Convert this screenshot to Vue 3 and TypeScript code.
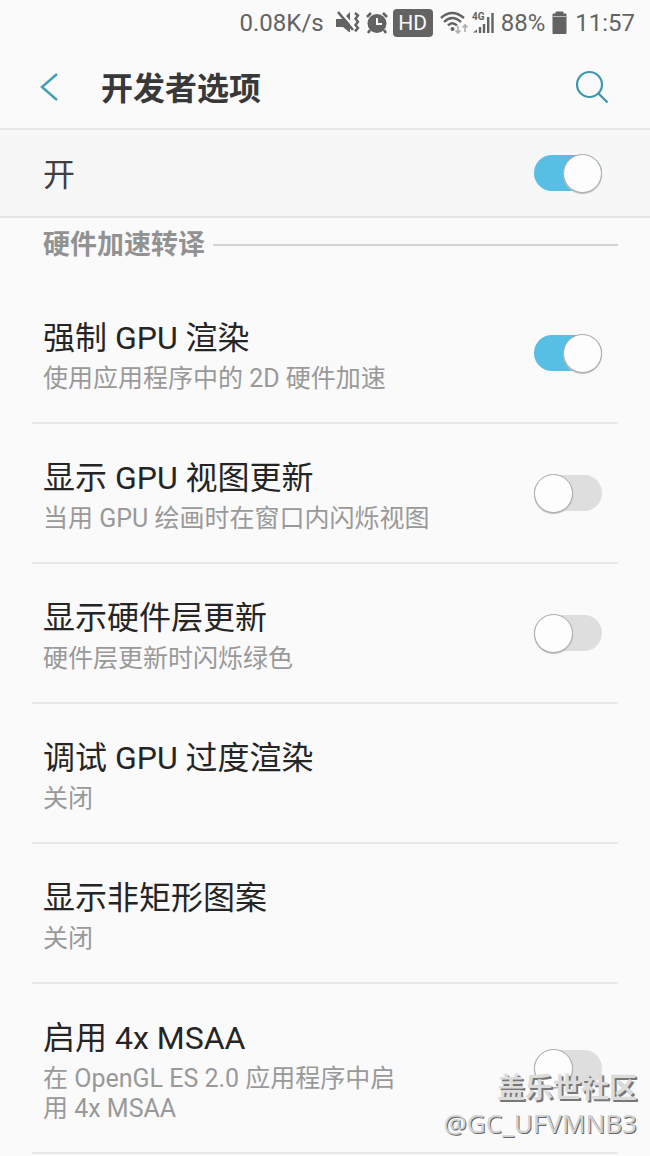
<script setup lang="ts">
import { ref } from 'vue'

interface Option {
  id: string
  title: string
  summary: string
  kind: 'switch' | 'link'
  on: boolean
}

const enabled = ref(true)

const options = ref<Option[]>([
  { id: 'force-gpu', title: '强制 GPU 渲染', summary: '使用应用程序中的 2D 硬件加速', kind: 'switch', on: true },
  { id: 'gpu-view', title: '显示 GPU 视图更新', summary: '当用 GPU 绘画时在窗口内闪烁视图', kind: 'switch', on: false },
  { id: 'hw-layer', title: '显示硬件层更新', summary: '硬件层更新时闪烁绿色', kind: 'switch', on: false },
  { id: 'overdraw', title: '调试 GPU 过度渲染', summary: '关闭', kind: 'link', on: false },
  { id: 'non-rect', title: '显示非矩形图案', summary: '关闭', kind: 'link', on: false },
  { id: 'msaa', title: '启用 4x MSAA', summary: '在 OpenGL ES 2.0 应用程序中启\n用 4x MSAA', kind: 'switch', on: false },
])
</script>

<template>
  <div class="page">
    <div class="status">
      <span class="speed">0.08K/s</span>
      <svg class="mute" width="24" height="24" viewBox="0 0 24 24" aria-hidden="true">
        <path d="M0 8h6l3-2 5-5v20h-1l-6-5H0z" fill="#636363" />
        <path d="M4 0l14 16" stroke="#fafafa" stroke-width="2.600" />
        <path d="M2 1l15 18" stroke="#636363" stroke-width="2.600" />
        <path d="M19 2l3 2.500-2.500 3.200 2.500 3-2.500 3.200 2.500 3-3 3.500" fill="none" stroke="#636363" stroke-width="2.400" />
      </svg>
      <svg class="alarm" width="22" height="24" viewBox="0 0 22 24" aria-hidden="true">
        <path d="M1 6l4-4M21 6l-4-4M4 19l-2 3M18 19l2 3" stroke="#636363" stroke-width="2.500" />
        <circle cx="11" cy="12.500" r="9.500" fill="#636363" />
        <path d="M11 7v6h5" fill="none" stroke="#fafafa" stroke-width="2" />
      </svg>
      <span class="hd">HD</span>
      <svg class="wifi" width="28" height="24" viewBox="0 0 28 24" aria-hidden="true">
        <g fill="none" stroke="#636363" stroke-width="2.400">
          <path d="M1 7Q12-3 24 7" />
          <path d="M4 11Q12 3 21 11" />
          <path d="M8 14.500Q12 10 17 14.500" />
        </g>
        <circle cx="12.500" cy="18" r="2" fill="#636363" />
        <path d="M18 15v7M15.500 19.500l2.500 2.500 2.500-2.500M25 21v-7M22.500 16.500l2.500-2.500 2.500 2.500" fill="none" stroke="#b0b0b0" stroke-width="1.600" />
      </svg>
      <svg class="signal" width="24" height="24" viewBox="0 0 24 24" aria-hidden="true">
        <text x="1" y="9" class="gen">4G</text>
        <path d="M2 21.500l4-3v3z" fill="#636363" />
        <path d="M9 22v-6M13 22v-9M17.200 22v-16M21.500 22v-20" stroke="#636363" stroke-width="2.400" />
      </svg>
      <span class="percent">88%</span>
      <svg class="battery" width="15" height="24" viewBox="0 0 15 24" aria-hidden="true">
        <path d="M4 1h7v2h3v19.500H1V3h3z" fill="#636363" stroke="#636363" stroke-width="1" />
        <path d="M1 5.500h13" stroke="#b8b8b8" stroke-width="1" />
      </svg>
      <span>11:57</span>
    </div>

    <header class="bar">
      <button class="icon-button" type="button" aria-label="返回">
        <svg width="20" height="30" viewBox="0 0 20 30" aria-hidden="true">
          <path d="M18 2L3 15l15 13" fill="none" stroke="#479fb5" stroke-width="2.500" />
        </svg>
      </button>
      <h1>开发者选项</h1>
      <button class="icon-button" type="button" aria-label="搜索">
        <svg width="34" height="34" viewBox="0 0 34 34" aria-hidden="true">
          <circle cx="14.500" cy="14.500" r="12.500" fill="none" stroke="#3f97ab" stroke-width="2.200" />
          <path d="M23.500 23.500L32.500 32.500" stroke="#3f97ab" stroke-width="2.400" />
        </svg>
      </button>
    </header>

    <div class="master">
      <label for="master">开</label>
      <input id="master" v-model="enabled" class="toggle" type="checkbox" role="switch" />
    </div>

    <main>
      <h2>硬件加速转译</h2>
      <ul>
        <li v-for="o in options" :key="o.id">
          <template v-if="o.kind === 'switch'">
            <label class="text" :for="o.id">
              <span class="title">{{ o.title }}</span>
              <span class="summary">{{ o.summary }}</span>
            </label>
            <input :id="o.id" v-model="o.on" class="toggle" type="checkbox" role="switch" />
          </template>
          <button v-else class="text" type="button">
            <span class="title">{{ o.title }}</span>
            <span class="summary">{{ o.summary }}</span>
          </button>
        </li>
      </ul>
    </main>

    <div class="watermark">
      <strong>盖乐世社区</strong>
      <span>@GC_UFVMNB3</span>
    </div>
  </div>
</template>

<style>
body {
  margin: 0;
  background: #fafafa;
}
</style>

<style scoped>
.page {
  position: relative;
  box-sizing: border-box;
  min-height: 100vh;
  overflow: hidden;
  background: #fafafa;
  color: #252525;
  font-family: Roboto, "Noto Sans CJK SC", sans-serif;
}

button {
  padding: 0;
  border: 0;
  background: none;
  color: inherit;
  font: inherit;
  text-align: left;
}

.status {
  display: flex;
  align-items: center;
  justify-content: flex-end;
  height: 46px;
  padding-right: 15px;
  color: #636363;
  font-size: 24px;
  line-height: 28px;
}

.mute { margin-left: 12px; }
.alarm { margin-left: 6px; }
.wifi { margin-left: 7px; }
.signal { margin-left: 3px; }
.percent { margin-left: 6px; }
.battery { margin: 0 8px 0 7px; }

.gen {
  fill: #636363;
  font-size: 10px;
  font-weight: 700;
}

.hd {
  width: 40px;
  margin-left: 5px;
  border-radius: 4px;
  background: #636363;
  color: #fafafa;
  font-size: 21px;
  text-align: center;
}

.bar {
  display: flex;
  align-items: center;
  height: 82px;
  padding: 0 41px 0 39px;
  border-bottom: 2px solid #e8e8e8;
}

.icon-button {
  display: flex;
}

h1 {
  flex: 1;
  margin: 0 0 0 42px;
  padding-top: 4px;
  color: #383838;
  font-size: 32px;
  font-weight: 700;
  line-height: 40px;
}

.master {
  display: flex;
  align-items: center;
  justify-content: space-between;
  height: 86px;
  padding: 0 48px 0 43px;
  border-bottom: 2px solid #e4e4e4;
  background: #f7f7f7;
  color: #404040;
  font-size: 32px;
  line-height: 40px;
}

.master label {
  padding-top: 4px;
}

h2 {
  display: flex;
  align-items: center;
  gap: 8px;
  margin: 0;
  padding: 8px 32px 0 43px;
  color: #929292;
  font-size: 27px;
  font-weight: 700;
  line-height: 38px;
}

h2::after {
  flex: 1;
  height: 2px;
  background: #d2d2d2;
  content: "";
}

ul {
  margin: 20px 32px 0;
  padding: 0;
  list-style: none;
}

li {
  display: flex;
  align-items: center;
  justify-content: space-between;
  padding: 0 16px 0 11px;
  border-bottom: 2px solid #e8e8e8;
}

.text {
  display: flex;
  flex: 1;
  flex-direction: column;
  gap: 6px;
  max-width: 400px;
  padding: 34px 0 28px;
}

.title {
  font-size: 32px;
  line-height: 40px;
}

.summary {
  color: #999;
  font-size: 25px;
  line-height: 30px;
  white-space: pre-line;
}

.toggle {
  display: flex;
  flex: none;
  align-items: center;
  width: 68px;
  height: 36px;
  margin: 0;
  border-radius: 18px;
  appearance: none;
  background: #dedede;
}

.toggle::before {
  box-sizing: border-box;
  width: 39px;
  height: 39px;
  flex: none;
  border: 1px solid #aaa;
  border-radius: 50%;
  background: #fdfdfd;
  box-shadow: 0 1px 1px #bbb;
  content: "";
}

.toggle:checked {
  justify-content: flex-end;
  background: #56bfe3;
}

.watermark {
  position: absolute;
  right: 13px;
  bottom: 15px;
  display: flex;
  flex-direction: column;
  align-items: flex-end;
  color: #d2d2d2;
  font-family: "Noto Sans", "Noto Sans CJK SC", sans-serif;
  font-size: 26px;
  line-height: 36px;
  text-shadow: 1px 1px 0 #666;
  pointer-events: none;
}

.watermark strong {
  color: #dcdcdc;
  font-size: 28px;
  text-shadow: 2px 2px 0 #777;
}
</style>
